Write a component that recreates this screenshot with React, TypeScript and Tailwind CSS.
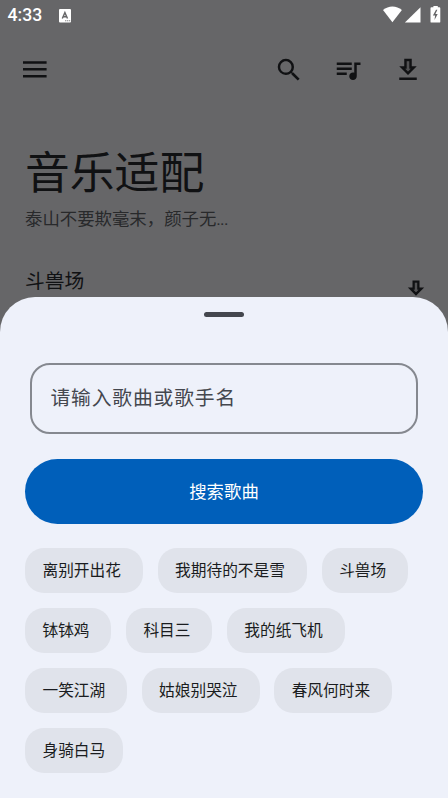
import React from "react";

const chips: { label: string; width: string }[][] = [
  [
    { label: "离别开出花", width: "w-[118px]" },
    { label: "我期待的不是雪", width: "w-[149.5px]" },
    { label: "斗兽场", width: "w-[86.3px]" },
  ],
  [
    { label: "钵钵鸡", width: "w-[86.3px]" },
    { label: "科目三", width: "w-[86.3px]" },
    { label: "我的纸飞机", width: "w-[118px]" },
  ],
  [
    { label: "一笑江湖", width: "w-[102px]" },
    { label: "姑娘别哭泣", width: "w-[118px]" },
    { label: "春风何时来", width: "w-[118px]" },
  ],
  [{ label: "身骑白马", width: "w-[98px]" }],
];

function Icon({ d, className }: { d: string; className: string }) {
  return (
    <svg viewBox="0 0 24 24" fill="currentColor" className={className}>
      <path d={d} />
    </svg>
  );
}

const SEARCH =
  "M15.5 14h-.79l-.28-.27A6.47 6.47 0 0 0 16 9.5 6.5 6.5 0 1 0 9.5 16c1.61 0 3.09-.59 4.23-1.57l.27.28v.79l5 4.99L20.49 19l-4.99-5zm-6 0C7.01 14 5 11.99 5 9.5S7.01 5 9.5 5 14 7.01 14 9.5 11.99 14 9.5 14z";
const QUEUE =
  "M15 6H3v2h12V6zm0 4H3v2h12v-2zM3 16h8v-2H3v2zM17 6v8.18c-.31-.11-.65-.18-1-.18-1.66 0-3 1.34-3 3s1.34 3 3 3 3-1.34 3-3V8h3V6h-5z";
const ARROW = "M19 9h-4V3H9v6H5l7 7 7-7zm-8 2V5h2v6h1.17L12 13.17 9.83 11H11z";

function StatusBar() {
  return (
    <div className="flex h-[30px] items-start text-white">
      <span className="ml-[7.5px] mt-[5px] w-[36px] font-[Roboto] text-[17.6px] font-medium leading-[21px]">4:33</span>
      <svg className="ml-[15.5px] mt-[8.5px] h-[14px] w-[12px]" viewBox="0 0 12 14">
        <rect width="12" height="13.5" rx="1" fill="#fff" />
        <path d="M3.3 9.5 5.9 3.6 8.5 9.5M4.3 7.7H7.5" fill="none" stroke="#666668" strokeWidth="1.4" />
        <path d="M6.2 11.2h1.1v1H6.2zM8.2 11.2h1.1v1H8.2zM10.2 11.2h1v1h-1z" fill="#666668" />
      </svg>
      <svg className="ml-auto mr-[7px] mt-[5px] h-[19px] w-[58px]" viewBox="0 0 58 19" fill="#fff">
        <path d="M0 5.1C5.4.4 13.5.4 18.9 5.1L9.4 17.3Z" />
        <path d="M38 2.2V17.5H22.4Z" transform="translate(-.5 0)" />
        <path d="M48.4 2.3h2V.9h4.4v1.4h1.6q.9 0 .9.9v13.5q0 .9-.9.9h-8q-.9 0-.9-.9V3.2q0-.9.9-.9Z" />
        <path d="m53 4.8-3.1 5.7h2.2l-.6 4.5 3.2-6.1h-2.3l2-4.1Z" fill="#666668" />
      </svg>
    </div>
  );
}

export default function App() {
  return (
    <div className="relative h-[798px] w-[448px] overflow-hidden bg-[#666668] font-['Noto_Sans_CJK_SC',sans-serif] text-[#101113]">
      <StatusBar />
      <header className="flex h-[79px] items-center pl-[23px] pr-[24.7px]">
        <svg className="h-[17px] w-[24px]" viewBox="0 0 24 17" fill="currentColor">
          <path d="M0 .3h23.6v2.5H0zM0 7.1h23.6v2.5H0zM0 13.9h23.6v2.5H0z" />
        </svg>
        <div className="ml-auto flex gap-[29.9px]">
          <Icon d={SEARCH} className="size-[30px]" />
          <Icon d={QUEUE} className="size-[30px]" />
          <svg viewBox="0 0 24 24" fill="currentColor" className="size-[30px]">
            <path d="M11 5h2v6h1.17L12 13.17 9.83 11H11z" fill="#515153" />
            <path d={ARROW + "M5 18h14v2H5z"} />
          </svg>
        </div>
      </header>
      <section className="pl-[25px] pr-[18px]">
        <h1 className="mt-[28px] h-[68px] text-[44.8px] leading-[66px]">音乐适配</h1>
        <p className="h-[26px] text-[17.4px] leading-[25px] text-[#28292b]">
          泰山不要欺毫末，颜子无<span className="font-[Roboto] tracking-[-0.8px]">...</span>
        </p>
        <div className="mt-[35px] flex items-start justify-between">
          <span className="text-[19.8px] leading-[28px]">斗兽场</span>
          <svg viewBox="0 0 24 24" fill="currentColor" className="mt-[11px] size-[28px]">
            <path d="M11 5h2v6h1.17L12 13.17 9.83 11H11z" fill="#515153" />
            <path d={ARROW} />
          </svg>
        </div>
      </section>

      <main className="absolute inset-x-0 bottom-0 top-[296.7px] rounded-t-[35px] bg-[#eef1fa] px-[25px]">
        <div className="mx-auto mt-[14.9px] h-[5.3px] w-[40px] rounded-full bg-[#44474e]" />
        <div className="mx-[5px] mt-[46.2px] flex h-[70.5px] items-center rounded-[20px] border-2 border-solid border-[#85888f] pb-[2px] pl-[18.4px] text-[19.8px] tracking-[0.85px] text-[#44474e]">
          请输入歌曲或歌手名
        </div>
        <button className="mt-[25.4px] flex h-[64.7px] w-full items-center justify-center rounded-full bg-[#005fba] text-[17.4px] text-white">
          搜索歌曲
        </button>
        <div className="mt-[24.8px] flex flex-col gap-[15px]">
          {chips.map((row, index) => (
            <div key={index} className="flex gap-[14.6px]">
              {row.map((chip) => (
                <span
                  key={chip.label}
                  className={`${chip.width} h-[44.9px] whitespace-nowrap rounded-[19px] bg-[#e0e3eb] pl-[17.5px] text-[15.7px] leading-[43px] text-[#1a1c20]`}
                >
                  {chip.label}
                </span>
              ))}
            </div>
          ))}
        </div>
      </main>
    </div>
  );
}
